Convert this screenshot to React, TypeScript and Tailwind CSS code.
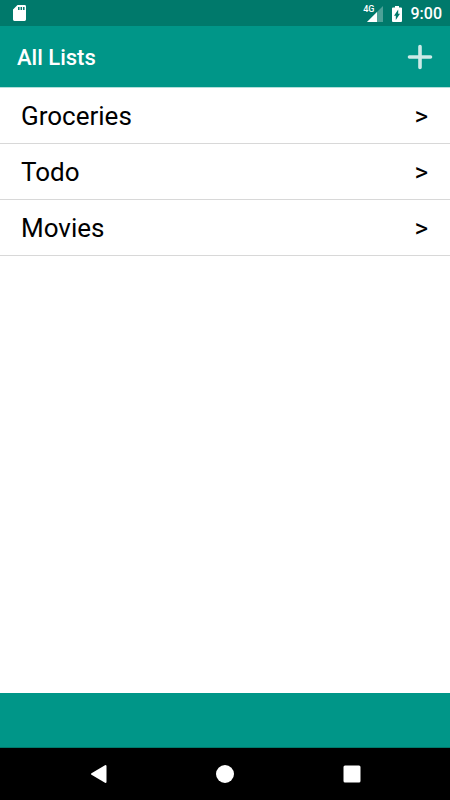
import React from 'react';

const lists = [
  { id: 'groceries', name: 'Groceries' },
  { id: 'todo', name: 'Todo' },
  { id: 'movies', name: 'Movies' },
];

function StatusBar() {
  return (
    <div className="flex h-[26px] shrink-0 items-center justify-between bg-[#00796b] pl-3 pr-2 text-white">
      {/* SD card */}
      <svg className="h-4 w-4" viewBox="0 0 16 16" aria-hidden="true">
        <path fill="#fff" d="M5.500 0h7.100a1.400 1.400 0 0 1 1.400 1.400v13.200a1.400 1.400 0 0 1-1.400 1.400H2.400A1.400 1.400 0 0 1 1 14.600V4.500z" />
        <path stroke="#00796b" strokeWidth="1.500" d="M6.800 2v3M9.300 2v3M11.800 2v3" />
      </svg>

      <div className="flex items-center gap-2 pt-px">
        <div className="flex items-center">
          <span className="self-start text-[9px] leading-[6px] font-medium">4G</span>
          <svg className="-ml-2 h-4 w-4" viewBox="0 0 16 16" aria-hidden="true">
            <path fill="#fff" fillOpacity="0.3" d="M16 0v16H0z" />
            <path fill="#fff" d="M10 6v10H0z" />
          </svg>
        </div>
        {/* Battery */}
        <svg className="h-4 w-3" viewBox="0 0 12 16" aria-hidden="true">
          <path fill="#fff" d="M4 0h4v1.600h2a1 1 0 0 1 1 1V15a1 1 0 0 1-1 1H2a1 1 0 0 1-1-1V2.600a1 1 0 0 1 1-1h2z" />
          <path fill="#00796b" d="M7.200 3.500v4.300H9l-4.200 6.200V9.800H3z" />
        </svg>
        <span className="text-base font-medium">9:00</span>
      </div>
    </div>
  );
}

function NavBar() {
  return (
    <nav className="flex h-[52px] shrink-0 items-center justify-around bg-black px-[35px]">
      <button type="button" aria-label="Back">
        <svg className="h-6 w-6" viewBox="0 0 24 24">
          <path fill="#fff" stroke="#fff" strokeWidth="2" strokeLinejoin="round" d="M19.500 4v16L6 12z" />
        </svg>
      </button>
      <button type="button" aria-label="Home">
        <svg className="h-6 w-6" viewBox="0 0 24 24">
          <circle cx="12" cy="12" r="9" fill="#fff" />
        </svg>
      </button>
      <button type="button" aria-label="Overview">
        <svg className="h-6 w-6" viewBox="0 0 24 24">
          <rect x="3.500" y="3.500" width="17" height="17" rx="1.500" fill="#fff" />
        </svg>
      </button>
    </nav>
  );
}

export default function App() {
  return (
    <div className="flex min-h-screen flex-col bg-white font-['Roboto',sans-serif]">
      <StatusBar />

      <header className="flex h-[62px] shrink-0 items-center justify-between border-b border-[#b2dfdb] bg-[#009688] pl-[17px] pr-4">
        <h1 className="pt-0.5 text-[22px] font-medium text-white">All Lists</h1>
        <button type="button" aria-label="Add list">
          <svg className="h-7 w-7" viewBox="0 0 28 28">
            <path stroke="#fff" strokeOpacity="0.8" strokeWidth="3.600" strokeLinecap="round" d="M14 3.500v21M3.500 14h21" />
          </svg>
        </button>
      </header>

      <main className="flex-1">
        <ul>
          {lists.map((list) => (
            <li key={list.id} className="border-b border-[#d8d8d8]">
              <a href={`#${list.id}`} className="flex h-[55px] items-center justify-between pl-[21px] pr-[22px] pt-0.5 text-black">
                <span className="text-[26px]">{list.name}</span>
                <span className="text-[26px]">&gt;</span>
              </a>
            </li>
          ))}
        </ul>
      </main>

      <footer className="h-[55px] shrink-0 border-b border-[#00796b] bg-[#009688]" />
      <NavBar />
    </div>
  );
}
